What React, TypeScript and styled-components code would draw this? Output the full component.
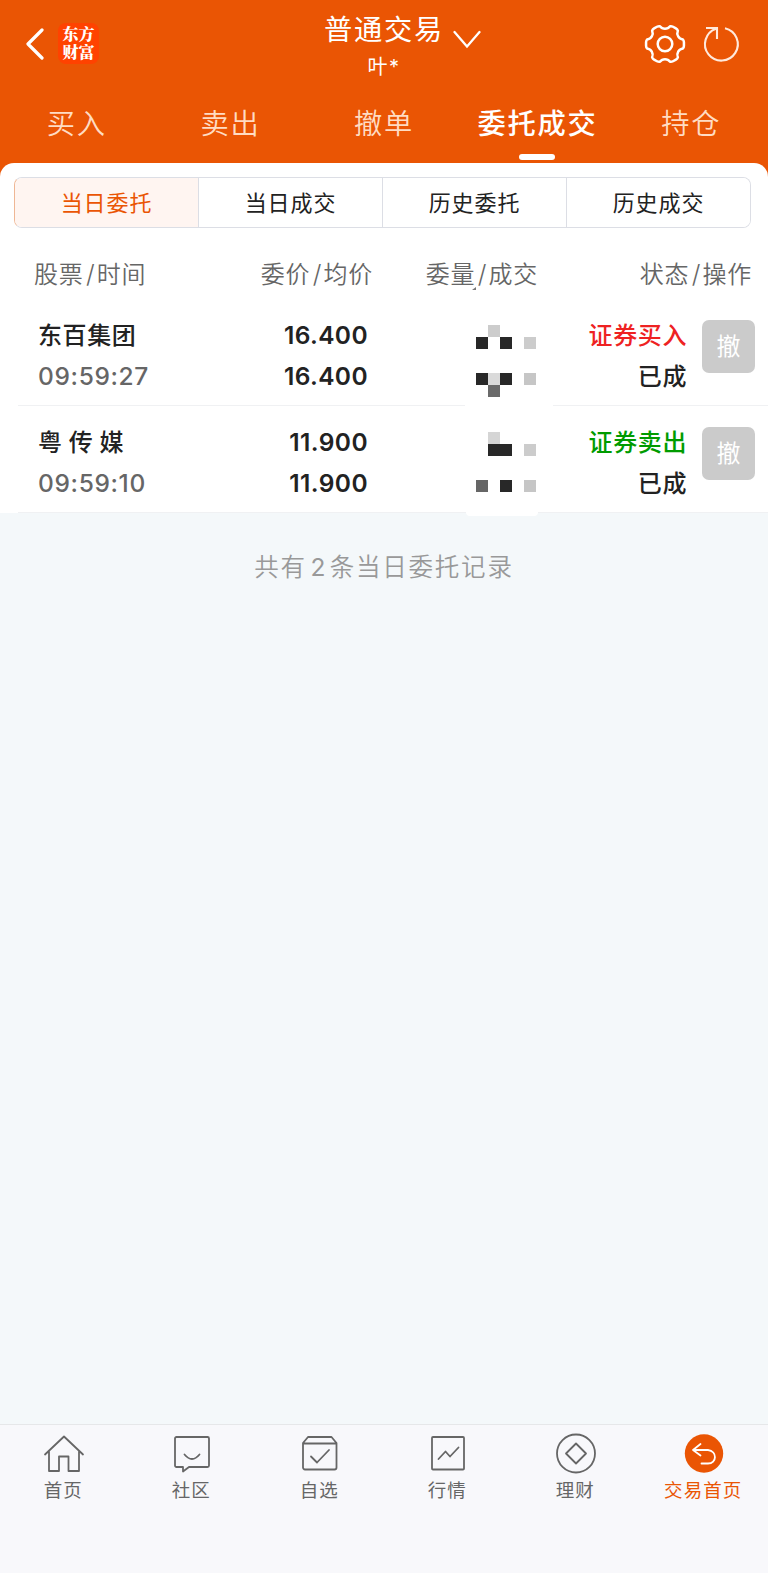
import React from 'react';
import styled, { createGlobalStyle } from 'styled-components';

const ORANGE = '#ea5504';

const GlobalStyle = createGlobalStyle`
  *, *::before, *::after { box-sizing: border-box; }
  body {
    margin: 0;
    background: #f4f8fa;
    font-family: Inter, 'Noto Sans CJK SC', sans-serif;
    color: #222;
  }
  button { font: inherit; letter-spacing: inherit; border: 0; background: none; padding: 0; color: inherit; }
  svg { display: block; fill: none; }
`;

const Page = styled.div`
  width: 768px;
  height: 1573px;
  display: flex;
  flex-direction: column;
  overflow: hidden;
  background: #f4f8fa;
`;

const Header = styled.header`
  flex: none;
  height: 177px;
  margin-bottom: -14px;
  background: ${ORANGE};
  color: #fff;
`;

const TitleBar = styled.div`
  height: 87px;
  display: grid;
  grid-template-columns: 256px 256px 256px;
`;

const HeaderLeft = styled.div`
  display: flex;
  align-items: center;
  padding-left: 25px;
  gap: 14px;
`;

const Logo = styled.div`
  width: 41px;
  height: 41px;
  padding: 2px 4px 0 4.5px;
  border-radius: 8px;
  background: #ff4200;
  word-break: break-all;
  font: 900 16px/18px 'Noto Serif CJK SC', 'Noto Sans CJK SC', sans-serif;
`;

const TitleBlock = styled.div`
  display: flex;
  flex-direction: column;
  align-items: center;
`;

const Title = styled.div`
  display: flex;
  height: 50px;
  margin: 5px 0 0 37px;
  align-items: center;
  gap: 9px;
  font-size: 28.3px;
  letter-spacing: 1.7px;
  line-height: 50px;
`;

const ChevronWrap = styled.span`
  padding-top: 20px;
`;

const Account = styled.div`
  height: 24px;
  line-height: 24px;
  font-size: 20px;
  letter-spacing: 1.5px;
`;

const HeaderRight = styled.div`
  display: flex;
  align-items: center;
  justify-content: flex-end;
  padding-right: 29px;
  gap: 18px;
`;

const Tabs = styled.nav`
  display: grid;
  grid-template-columns: repeat(5, 1fr);
  height: 76px;
`;

const Tab = styled.button<{ $active?: boolean }>`
  display: flex;
  flex-direction: column;
  align-items: center;
  font-size: 28.3px;
  line-height: 75px;
  letter-spacing: 1.7px;
  font-weight: ${p => (p.$active ? 500 : 350)};
  color: ${p => (p.$active ? '#fff' : '#ffdcc3')};
`;

const TabMark = styled.span`
  width: 36px;
  height: 6px;
  margin: -8px 1px 0 0;
  border-radius: 3px;
  background: #fff;
`;

const Panel = styled.main`
  flex: none;
  position: relative;
  height: 349.5px;
  padding-top: 14px;
  border-radius: 14px 14px 0 0;
  background: #fff;
`;

const Segments = styled.div`
  display: grid;
  grid-template-columns: 184px 184px 184px 1fr;
  height: 51px;
  width: 737px;
  margin-left: 14px;
  border: 1px solid #dcdee5;
  border-left-color: #efb795;
  border-radius: 8px;
  overflow: hidden;
`;

const Segment = styled.button<{ $active?: boolean }>`
  padding: 1px 0 0 0;
  font-size: 22px;
  letter-spacing: 0.9px;
  line-height: 48px;
  color: ${p => (p.$active ? ORANGE : '#222')};
  background: ${p => (p.$active ? '#fff5f1' : '#fff')};
  border-right: 1px solid #dcdee5;
  &:last-child { border-right: 0; }
`;

const ColumnHeads = styled.div`
  display: grid;
  grid-template-columns: 160px 213px 165px 214px;
  height: 71px;
  padding-top: 22px;
  color: #666;
  font-size: 24px;
  line-height: 48px;
  letter-spacing: 0.7px;
  font-weight: 350;
  white-space: nowrap;
`;

const Head = styled.span<{ $first?: boolean }>`
  position: relative;
  text-align: ${p => (p.$first ? 'left' : 'right')};
  padding-left: ${p => (p.$first ? '34px' : '0')};
`;

const Tick = styled.i`
  position: absolute;
  right: 62px;
  top: 37px;
  width: 4px;
  height: 3px;
  background: #777;
  clip-path: polygon(100% 0, 100% 100%, 0 100%);
`;

const Slash = styled.span`
  font-size: 25px;
  margin: 0 1.5px 0 2.5px;
`;

const Order = styled.article`
  display: grid;
  grid-template-columns: 142px 208px 168px 151px 68px;
  height: 107px;
  margin-left: 18px;
  border-bottom: 1px solid #f0f1f3;
`;

const Cell = styled.div<{ $left?: boolean }>`
  display: flex;
  flex-direction: column;
  padding-top: 16px;
  line-height: 41px;
  font-size: 24px;
  letter-spacing: 0.6px;
  white-space: pre;
  align-items: ${p => (p.$left ? 'flex-start' : 'flex-end')};
  margin-left: ${p => (p.$left ? '20px' : '0')};
`;

const Line = styled.span<{ $color?: string }>`
  height: 41px;
  color: ${p => p.$color ?? '#222'};
  font-weight: 500;
`;

const StockName = styled(Line)`
  word-spacing: -0.8px;
`;

const Time = styled(Line)`
  color: #666;
  font-size: 24.5px;
  letter-spacing: 0.65px;
`;

const Price = styled(Line)`
  font-size: 24.5px;
  letter-spacing: 0.4px;
  font-weight: 600;
`;

const Mosaic = styled.div<{ $wide?: boolean }>`
  position: relative;
  justify-self: end;
  width: ${p => (p.$wide ? 88 : 72)}px;
  margin-right: ${p => (p.$wide ? -17 : -2)}px;
  height: 110px;
  display: grid;
  grid-template-columns: repeat(5, 12px);
  grid-auto-rows: 12px;
  padding: 26px 0 0 ${p => (p.$wide ? 11 : 10)}px;
  background: #fff;
  border-radius: 0 0 4px 4px;
`;

const Tile = styled.i<{ $tone: string }>`
  background: ${p => p.$tone};
`;

const CancelButton = styled.button`
  width: 53px;
  height: 53px;
  margin: 21px 0 0 15px;
  border-radius: 7px;
  background: #cbcbcb;
  color: #fff;
  font-size: 24px;
  line-height: 53px;
`;

const Summary = styled.p`
  flex: 1;
  margin: 0;
  padding-top: 34.5px;
  text-align: center;
  font-size: 24.5px;
  line-height: 40px;
  letter-spacing: 1.8px;
  font-weight: 350;
  color: #999;
`;

const Count = styled.span`
  margin: 0 2.5px 0 3.5px;
  font-weight: 400;
`;

const BottomNav = styled.footer`
  flex: none;
  height: 149px;
  display: grid;
  grid-template-columns: repeat(6, 1fr);
  border-top: 1px solid #e6e7e9;
  background: #f8f8fb;
`;

const NavItem = styled.button<{ $active?: boolean }>`
  display: flex;
  flex-direction: column;
  align-items: center;
  padding-top: 9.5px;
  font-size: 18.5px;
  line-height: 30px;
  color: ${p => (p.$active ? ORANGE : '#666')};
  svg { margin-bottom: 2.5px; }
`;

const NavLabel = styled.span`
  letter-spacing: 1.1px;
  margin-right: 1.5px;
`;

const D = '#282828';
const mosaics = [
  [
    ['', '#ccc', '', '', ''],
    [D, '', D, '', '#ccc'],
    [], [],
    [D, '#dadada', D, '', '#c6c6c6'],
    ['', '#6a6a6a', '', '', ''],
  ],
  [
    ['', '#d5d5d5', '', '', ''],
    ['', D, D, '', '#ccc'],
    [], [],
    ['#666', '', D, '', '#c6c6c6'],
  ],
];

const orders = [
  { name: '东百集团', time: '09:59:27', price: '16.400', side: '证券买入', color: '#ee2222' },
  { name: '粤 传 媒', time: '09:59:10', price: '11.900', side: '证券卖出', color: '#009b00' },
];

const polar = (deg: number, r: number) => {
  const a = (deg * Math.PI) / 180;
  return `${(20 + r * Math.cos(a)).toFixed(2)} ${(20 + r * Math.sin(a)).toFixed(2)}`;
};

// Six rounded teeth joined by concave notches.
const gearPath =
  `M${polar(-14, 18.5)}` +
  [0, 60, 120, 180, 240, 300]
    .map(t => `Q${polar(t - 10, 19.2)} ${polar(t - 5, 19)}L${polar(t + 5, 19)}Q${polar(t + 10, 19.2)} ${polar(t + 14, 18.5)}C${polar(t + 20, 14.6)} ${polar(t + 40, 14.6)} ${polar(t + 46, 18.5)}`)
    .join('') + 'Z';

const line = { stroke: 'currentColor', strokeWidth: 1.8, strokeLinejoin: 'round' as const, strokeLinecap: 'round' as const };

const navItems = [
  { label: '首页', icon: <path {...line} d="M1 19.500 20 1.500 39 19.500M5 16.500V36h10V21.500h9.500V36h10.500V16.500" /> },
  { label: '社区', icon: <path {...line} d="M4.500 2h31a1.500 1.500 0 0 1 1.500 1.500v27a1.500 1.500 0 0 1-1.500 1.500H17l-6 4.500V32H4.500A1.500 1.500 0 0 1 3 30.500v-27A1.500 1.500 0 0 1 4.500 2ZM12.500 19.500q7.500 9 15 0" /> },
  { label: '自选', icon: <path {...line} d="M3 8 8 2h23.500L36.500 8v24.500a2 2 0 0 1-2 2H5a2 2 0 0 1-2-2ZM3 8.500h33.500M11 21.500l6 6 12-12.500" /> },
  { label: '行情', icon: <><rect {...line} x="4" y="2" width="32" height="32.500" rx="1" /><path {...line} d="m10.500 24 7-7.500 4.500 5 8.500-9" /></> },
  { label: '理财', icon: <><circle {...line} cx="20" cy="18.500" r="19" /><path {...line} d="M20 8.500 30 18.500 20 28.500 10 18.500Z" /></> },
  { label: '交易首页', active: true, icon: <><circle cx="20" cy="18.500" r="19.200" fill={ORANGE} /><path stroke="#fff" strokeWidth="1.8" strokeLinecap="round" strokeLinejoin="round" d="m16.500 9-7.500 6 7.500 5.500M9.500 15h14.500c9.500 1 9 13.500 0 13.500h-6.500" /></> },
];

export default function App() {
  return (
    <Page>
      <GlobalStyle />
      <Header>
        <TitleBar>
          <HeaderLeft>
            <svg width="19" height="32" viewBox="0 0 19 32">
              <path d="M17 2 3 16 17 30" stroke="#fff" strokeWidth="3.200" strokeLinecap="round" strokeLinejoin="round" />
            </svg>
            <Logo>东方财富</Logo>
          </HeaderLeft>
          <TitleBlock>
            <Title>
              <span>普通交易</span>
              <ChevronWrap>
                <svg width="28" height="20" viewBox="0 0 28 20">
                  <path d="M1.500 2 14 16.500 26.500 2" stroke="#fff" strokeWidth="2.300" strokeLinecap="round" />
                </svg>
              </ChevronWrap>
            </Title>
            <Account>叶*</Account>
          </TitleBlock>
          <HeaderRight>
            <svg width="40" height="40" viewBox="0 0 40 40" stroke="#fff" strokeWidth="2.500" strokeLinejoin="round" overflow="visible">
              <path d={gearPath} />
              <circle cx="20" cy="20" r="7.300" />
            </svg>
            <svg width="36" height="38" viewBox="0 0 36 38" stroke="#ffe9dc" strokeWidth="2.100" overflow="visible">
              <path d="M22 3.200A16.400 16.400 0 1 1 13 3.700M3 3H14V14" />
            </svg>
          </HeaderRight>
        </TitleBar>
        <Tabs>
          <Tab>买入</Tab>
          <Tab>卖出</Tab>
          <Tab>撤单</Tab>
          <Tab $active>委托成交<TabMark /></Tab>
          <Tab>持仓</Tab>
        </Tabs>
      </Header>
      <Panel>
        <Segments>
          <Segment $active>当日委托</Segment>
          <Segment>当日成交</Segment>
          <Segment>历史委托</Segment>
          <Segment>历史成交</Segment>
        </Segments>
        <ColumnHeads>
          <Head $first>股票<Slash>/</Slash>时间</Head>
          <Head>委价<Slash>/</Slash>均价</Head>
          <Head>委量<Slash>/</Slash>成交<Tick /></Head>
          <Head>状态<Slash>/</Slash>操作</Head>
        </ColumnHeads>
        {orders.map((o, i) => (
          <Order key={o.name}>
            <Cell $left>
              <StockName>{o.name}</StockName>
              <Time $color="#666">{o.time}</Time>
            </Cell>
            <Cell>
              <Price>{o.price}</Price>
              <Price>{o.price}</Price>
            </Cell>
            <Mosaic $wide={i === 0}>
              {mosaics[i].flatMap((row, r) =>
                row.map((tone, c) => tone && (
                  <Tile key={`${r}-${c}`} $tone={tone} style={{ gridRow: r + 1, gridColumn: c + 1 }} />
                )),
              )}
            </Mosaic>
            <Cell>
              <Line $color={o.color}>{o.side}</Line>
              <Line>已成</Line>
            </Cell>
            <CancelButton>撤</CancelButton>
          </Order>
        ))}
      </Panel>
      <Summary>共有<Count>2</Count>条当日委托记录</Summary>
      <BottomNav>
        {navItems.map(n => (
          <NavItem key={n.label} $active={n.active}>
            <svg width="40" height="38" viewBox="0 0 40 38" overflow="visible">{n.icon}</svg>
            <NavLabel>{n.label}</NavLabel>
          </NavItem>
        ))}
      </BottomNav>
    </Page>
  );
}
